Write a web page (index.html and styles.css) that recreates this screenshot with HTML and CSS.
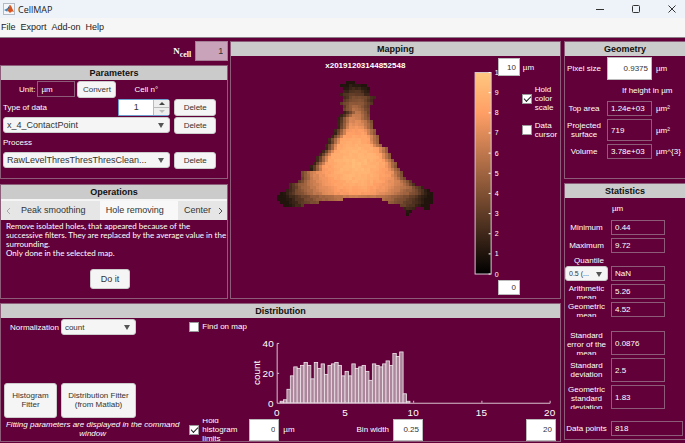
FILE: index.html
```html
<!DOCTYPE html>
<html lang="en">
<head>
  <meta charset="utf-8">
  <title>CellMAP</title>
  <meta name="viewport" content="width=device-width, initial-scale=1.0">
  <link rel="stylesheet" href="styles.css">
</head>
<body>
  <header class="titlebar">
    <svg class="logo" width="12" height="12" viewBox="0 0 12 12">
      <rect x="0.5" y="0.5" width="11" height="11" fill="#f4f6fa" stroke="#b4bac4"/>
      <path d="M1 7 L4 5.5 L5.5 6.5 L3.8 8.5 Z" fill="#3d84b8"/>
      <path d="M4 5.5 C5.5 5 6 2 7 2 L5.5 6.5 Z" fill="#23527c"/>
      <path d="M7 2 C8.2 2 9.5 6.5 11 9 C9.5 8 8.5 8.4 6.8 10 C6 8.5 5 8 3.8 8.5 C5.5 7 6 4 7 2 Z" fill="#d9541e"/>
    </svg>
    <h1>CellMAP</h1>
    <div class="window-buttons">
      <button aria-label="Minimize"><svg width="8" height="8" viewBox="0 0 8 8"><path d="M0 4.5H8"/></svg></button>
      <button aria-label="Maximize"><svg width="8" height="8" viewBox="0 0 8 8"><rect x="0.5" y="0.5" width="7" height="7" rx="1"/></svg></button>
      <button aria-label="Close"><svg width="8" height="8" viewBox="0 0 8 8"><path d="M0.5 0.5L7.5 7.5M7.5 0.5L0.5 7.5"/></svg></button>
    </div>
  </header>
  <nav class="menubar">
    <a href="#">File</a>
    <a href="#">Export</a>
    <a href="#">Add-on</a>
    <a href="#">Help</a>
  </nav>

  <div class="app">
    <main class="main">
      <div class="top">
        <div class="left">
          <div class="ncell">
            <label for="ncell">N<sub>cell</sub></label>
            <input id="ncell" value="1" readonly>
          </div>

          <section class="panel parameters">
            <h2>Parameters</h2>
            <div class="param-row unit-row">
              <label for="unit">Unit:</label>
              <input id="unit" class="value" value="µm" readonly>
              <button class="btn">Convert</button>
              <label class="cell-label" for="cellNumber">Cell n°</label>
            </div>
            <div class="param-row">
              <label for="dataType">Type of data</label>
              <div class="stepper">
                <input id="cellNumber" value="1">
                <div class="arrows">
                  <button aria-label="Increase"><i class="up"></i></button>
                  <button aria-label="Decrease"><i class="down"></i></button>
                </div>
              </div>
              <button class="btn delete">Delete</button>
            </div>
            <div class="param-row">
              <div class="dropdown">
                <select id="dataType"><option>x_4_ContactPoint</option></select>
              </div>
              <button class="btn delete">Delete</button>
            </div>
            <label class="process-label" for="process">Process</label>
            <div class="param-row">
              <div class="dropdown">
                <select id="process"><option>RawLevelThresThresThresClean...</option></select>
              </div>
              <button class="btn delete">Delete</button>
            </div>
          </section>

          <section class="panel operations">
            <h2>Operations</h2>
            <div class="tabs">
              <button class="scroll" aria-label="Previous tabs"><svg width="5" height="8" viewBox="0 0 5 8"><path d="M4 1L1 4L4 7"/></svg></button>
              <button class="tab">Peak smoothing</button>
              <button class="tab active">Hole removing</button>
              <button class="tab last">Center</button>
              <button class="scroll dark" aria-label="Next tabs"><svg width="5" height="8" viewBox="0 0 5 8"><path d="M1 1L4 4L1 7"/></svg></button>
            </div>
            <p>Remove isolated holes, that appeared because of the<br>successive filters. They are replaced by the average value in the<br>surrounding.<br>Only done in the selected map.</p>
            <button class="btn do-it">Do it</button>
          </section>
        </div>

        <section class="panel mapping">
          <h2>Mapping</h2>
          <div class="map-body">
            <svg id="map" class="map" viewBox="0 0 266 240"></svg>
            <div class="map-side">
              <div class="limit">
                <input id="mapMax" class="number" value="10">
                <label for="mapMax">µm</label>
              </div>
              <div class="check hold">
                <input type="checkbox" id="holdColor" checked>
                <label for="holdColor">Hold color scale</label>
              </div>
              <div class="check">
                <input type="checkbox" id="dataCursor">
                <label for="dataCursor">Data cursor</label>
              </div>
              <input class="number map-min" value="0" aria-label="Minimum of the color scale">
            </div>
          </div>
        </section>
      </div>

      <section class="panel distribution">
        <h2>Distribution</h2>
        <div class="dist-body">
          <div class="dist-left">
            <div class="normalization">
              <label for="norm">Normalization</label>
              <div class="dropdown">
                <select id="norm"><option>count</option></select>
              </div>
            </div>
            <div class="fitters">
              <button class="btn">Histogram Fitter</button>
              <button class="btn">Distribution Fitter (from Matlab)</button>
            </div>
            <p>Fitting parameters are displayed in the command window</p>
          </div>
          <div class="dist-right">
            <div class="check find">
              <input type="checkbox" id="findOnMap">
              <label for="findOnMap">Find on map</label>
            </div>
            <svg id="histogram" class="histogram" viewBox="0 0 380 84"></svg>
            <div class="limits">
              <div class="check">
                <input type="checkbox" id="holdHist" checked>
                <label for="holdHist">Hold histogram limits</label>
              </div>
              <input id="histMin" class="number" value="0">
              <label for="histMin">µm</label>
              <label class="bin-label" for="binWidth">Bin width</label>
              <input id="binWidth" class="number" value="0.25">
              <input class="number hist-max" value="20" aria-label="Maximum of the histogram">
            </div>
          </div>
        </div>
      </section>
    </main>

    <aside class="side">
      <section class="panel geometry">
        <h2>Geometry</h2>
        <div class="geo-grid">
          <label for="pixelSize">Pixel size</label>
          <input id="pixelSize" class="number" value="0.9375">
          <span>µm</span>
          <span class="note">If height in µm</span>
          <label for="topArea">Top area</label>
          <input id="topArea" class="value" value="1.24e+03" readonly>
          <span>µm²</span>
          <label for="surface">Projected surface</label>
          <input id="surface" class="value" value="719" readonly>
          <span>µm²</span>
          <label for="volume">Volume</label>
          <input id="volume" class="value" value="3.78e+03" readonly>
          <span>µm^{3}</span>
        </div>
      </section>

      <section class="panel statistics">
        <h2>Statistics</h2>
        <div class="stat-unit">µm</div>
        <div class="stat">
          <label for="min">Minimum</label>
          <input id="min" class="value" value="0.44" readonly>
        </div>
        <div class="stat">
          <label for="max">Maximum</label>
          <input id="max" class="value" value="9.72" readonly>
        </div>
        <label class="quantile-label" for="quantile">Quantile</label>
        <div class="stat">
          <div class="dropdown small">
            <select id="quantile"><option>0.5 (...</option></select>
          </div>
          <input class="value" value="NaN" aria-label="Quantile value" readonly>
        </div>
        <div class="stat">
          <label for="amean">Arithmetic mean</label>
          <input id="amean" class="value" value="5.26" readonly>
        </div>
        <div class="stat">
          <label for="gmean">Geometric mean</label>
          <input id="gmean" class="value" value="4.52" readonly>
        </div>
        <div class="stat tall spaced">
          <label for="sem">Standard error of the mean</label>
          <input id="sem" class="value" value="0.0876" readonly>
        </div>
        <div class="stat tall">
          <label for="std">Standard deviation</label>
          <input id="std" class="value" value="2.5" readonly>
        </div>
        <div class="stat tall">
          <label for="gstd">Geometric standard deviation</label>
          <input id="gstd" class="value" value="1.83" readonly>
        </div>
        <div class="stat points">
          <label for="points">Data points</label>
          <input id="points" class="value" value="818" readonly>
        </div>
      </section>
    </aside>
  </div>

  <script src="script.js"></script>
</body>
</html>
```
FILE: styles.css
```css
* {
  box-sizing: border-box;
}

body {
  margin: 0;
  min-height: 100vh;
  background: #62003a;
  color: #fff;
  font-family: "Liberation Sans", Arial, sans-serif;
  font-size: 8px;
  line-height: 9px;
}

input, select, button {
  font: inherit;
  color: #333;
  margin: 0;
  padding: 0;
  border: none;
  border-radius: 0;
  min-width: 0;
}

h1, h2, p {
  margin: 0;
}

svg {
  display: block;
}

/* window frame */
.titlebar {
  display: flex;
  align-items: center;
  height: 18px;
  padding: 0 9px 0 3px;
  background: #eef3fa;
}

.titlebar h1 {
  margin-left: 3px;
  color: #222;
  font-family: "Open Sans", sans-serif;
  font-size: 9px;
  font-weight: 400;
}

.window-buttons {
  display: flex;
  gap: 28px;
  margin-left: auto;
}

.window-buttons button {
  background: none;
}

.window-buttons svg {
  fill: none;
  stroke: #333;
}

.menubar {
  display: flex;
  align-items: center;
  gap: 5px;
  height: 20px;
  padding-left: 1px;
  background: #f6f6f6;
  border-bottom: 1px solid #8a8088;
}

.menubar a {
  color: #222;
  font-size: 9px;
  text-decoration: none;
}

/* layout */
.app {
  display: flex;
  gap: 3px;
  padding-top: 3px;
}

.main {
  flex: 561 1 0;
  min-width: 0;
}

.side {
  flex: 121 1 0;
  min-width: 0;
}

.top {
  display: flex;
  gap: 2px;
}

.left {
  flex: 229 1 0;
  min-width: 0;
}

.panel {
  border: 1px solid #8d5c79;
}

.panel h2 {
  height: 14px;
  background: #cbcbcb;
  color: #111;
  font-size: 9px;
  line-height: 14px;
  text-align: center;
}

/* shared controls */
.btn {
  background: #f5f5f5;
  border: 1px solid #ccc;
  border-radius: 3px;
  font-size: 8px;
}

.value {
  height: 15px;
  padding: 0 3px;
  background: transparent;
  border: 1px solid #8d5c79;
  color: #fff;
}

.number {
  background: #fff;
  border: 1px solid #bbb;
  padding: 0 3px;
  text-align: right;
}

.dropdown {
  position: relative;
}

.dropdown select {
  appearance: none;
  display: block;
  width: 100%;
  height: 16px;
  padding-left: 3px;
  background: #f5f5f5;
  border: 1px solid #ccc;
  border-radius: 3px;
  font-size: 9px;
}

.dropdown::after {
  content: "";
  position: absolute;
  right: 6px;
  top: 6px;
  border: 3px solid transparent;
  border-top: 5px solid #555;
  border-bottom: none;
  pointer-events: none;
}

.check {
  display: flex;
  align-items: center;
  gap: 3px;
}

.check input {
  appearance: none;
  flex: none;
  width: 10px;
  height: 10px;
  background: #fff;
  border: 1px solid #999;
}

.check input:checked::before {
  content: "";
  display: block;
  width: 6px;
  height: 3px;
  margin: 1px;
  border: solid #222;
  border-width: 0 0 1px 1px;
  transform: rotate(-45deg);
}

/* parameters */
.ncell {
  display: flex;
  justify-content: flex-end;
  align-items: center;
  gap: 4px;
  height: 24px;
  padding-bottom: 4px;
}

.ncell label {
  font-family: "Liberation Serif", serif;
  font-size: 9px;
  font-weight: 700;
}

.ncell sub {
  font-size: 8px;
  line-height: 0;
}

.ncell input {
  width: 33px;
  height: 20px;
  padding-right: 4px;
  background: #c8a3ba;
  border: 1px solid #a57d95;
  font-size: 9px;
  text-align: right;
}

.parameters {
  min-height: 114px;
}

.param-row {
  display: flex;
  align-items: center;
  justify-content: space-between;
  gap: 4px;
  height: 18px;
  padding: 0 11px 0 2px;
}

.unit-row {
  justify-content: flex-start;
  gap: 2px;
  padding-left: 18px;
}

.unit-row .value {
  width: 38px;
  height: 16px;
}

.unit-row .btn {
  width: 39px;
  height: 17px;
}

.cell-label {
  margin-left: 16px;
}

.btn.delete {
  flex: none;
  width: 42px;
  height: 17px;
}

.param-row .dropdown {
  flex: 1;
}

.stepper {
  display: flex;
  width: 52px;
  height: 17px;
  margin-left: auto;
  background: #fff;
  border: 1px solid #6d9fd0;
  border-radius: 0 3px 3px 0;
}

.stepper input {
  flex: 1;
  background: none;
  font-size: 9px;
  text-align: center;
}

.arrows {
  display: grid;
  width: 16px;
  gap: 1px;
  background: #bbb;
}

.arrows button {
  display: grid;
  place-items: center;
  background: #eee;
  border-left: 1px solid #bbb;
}

.arrows i {
  border: 3px solid transparent;
}

.arrows .up {
  border-top: none;
  border-bottom-color: #444;
}

.arrows .down {
  border-bottom: none;
  border-top-color: #bbb;
}

.process-label {
  display: block;
  height: 17px;
  padding: 4px 2px;
}

/* operations */
.operations {
  margin-top: 5px;
  min-height: 115px;
}

.tabs {
  display: flex;
  height: 21px;
  padding-top: 2px;
  background: #f5f5f5;
}

.tabs button {
  background: #e6e6e6;
  font-size: 9px;
  white-space: nowrap;
}

.tabs .scroll {
  display: grid;
  place-items: center;
  flex: none;
  width: 14px;
}

.tabs .scroll svg {
  fill: none;
  stroke: #aaa;
}

.tabs .scroll.dark svg {
  stroke: #555;
}

.tabs .tab {
  flex: 86 1 0;
  padding-left: 6px;
  text-align: left;
}

.tabs .tab.active {
  flex: 79 1 0;
  background: #f8f8f8;
}

.tabs .tab.last {
  flex: 32 1 0;
}

.operations p {
  padding: 2px 0 0 5px;
  font-family: Lato, "Liberation Sans", sans-serif;
  white-space: nowrap;
}

.do-it {
  display: block;
  width: 40px;
  height: 20px;
  margin: 11px auto 0 89px;
  font-size: 9px;
}

/* mapping */
.mapping {
  flex: 330 1 0;
  min-width: 0;
}

.map-body {
  display: flex;
}

.map {
  flex: 266 1 0;
  min-width: 0;
  overflow: visible;
}

.map text {
  fill: #fff;
  font-size: 7px;
}

.map .map-title {
  font-size: 8px;
  font-weight: 700;
}

.map-side {
  flex: 62 1 0;
  display: flex;
  flex-direction: column;
  align-items: flex-start;
  padding: 2px 0;
}

.map-side .limit {
  display: flex;
  align-items: center;
  gap: 3px;
}

.map-side .number {
  width: 22px;
  height: 18px;
}

.map-side .check {
  margin: 9px 0 0 24px;
}

.map-side .check label {
  width: 22px;
}

.map-side .map-min {
  height: 15px;
  margin-top: auto;
}

/* distribution */
.distribution {
  margin-top: 4px;
}

.dist-body {
  display: flex;
}

.dist-left {
  flex: 178 1 0;
  min-width: 0;
  display: flex;
  flex-direction: column;
  padding: 1px 0 0 3px;
}

.dist-right {
  flex: 380 1 0;
  min-width: 0;
}

.normalization {
  display: flex;
  align-items: center;
  gap: 2px;
  padding-left: 6px;
}

.normalization .dropdown {
  width: 75px;
}

.normalization select {
  font-size: 8px;
}

.fitters {
  display: flex;
  gap: 4px;
  margin-top: auto;
}

.fitters .btn {
  width: 53px;
  height: 35px;
  padding: 0 5px;
}

.fitters .btn + .btn {
  width: 75px;
}

.dist-left p {
  height: 23px;
  padding-top: 2px;
  font-style: italic;
  text-align: center;
}

.find {
  height: 17px;
  padding-left: 8px;
}

.histogram {
  width: 100%;
}

.histogram text {
  fill: #fff;
  font-size: 10px;
}

.limits {
  display: flex;
  align-items: center;
  height: 22px;
  padding: 0 4px 0 8px;
}

.limits .check {
  width: 60px;
}

.limits .check label {
  display: flex;
  align-items: center;
  height: 22px;
  overflow: hidden;
}

.limits .number {
  width: 30px;
  height: 22px;
}

.limits #histMin + label {
  margin-left: 4px;
}

.bin-label {
  margin: 0 4px 0 auto;
}

.limits .hist-max {
  margin-left: 103px;
}

/* geometry */
.side .panel {
  border-right: none;
}

.geometry {
  min-height: 138px;
}

.geo-grid {
  display: grid;
  grid-template-columns: 38px 45px 1fr;
  grid-template-rows: 23px 15px 15px 22px 15px;
  align-items: center;
  gap: 3px 4px;
  padding-top: 1px;
}

.geo-grid label {
  text-align: center;
}

.geo-grid input {
  height: 100%;
}

.geo-grid .note {
  grid-column: 1 / -1;
  padding-left: 57px;
}

/* statistics */
.statistics {
  margin-top: 4px;
}

.stat-unit {
  height: 22px;
  padding: 6px 0 0 47px;
}

.stat {
  display: flex;
  align-items: center;
  gap: 3px;
  height: 15px;
  margin-bottom: 3px;
}

.stat label {
  width: 43px;
  max-height: 15px;
  overflow: hidden;
  text-align: center;
}

.stat .value {
  width: 54px;
}

.stat.tall, .stat.tall .value {
  height: 24px;
}

.stat.tall label {
  max-height: 24px;
}

.stat.spaced {
  margin-top: 14px;
}

.quantile-label {
  display: block;
  width: 48px;
  height: 10px;
  text-align: center;
}

.dropdown.small {
  width: 43px;
}

.dropdown.small select {
  height: 15px;
  font-size: 7px;
}

.stat.points {
  margin-top: 12px;
}

.stat.points label {
  white-space: nowrap;
}

.stat.points .value {
  flex: 1;
  margin-right: 2px;
}
```
FILE: script.js
```js
const SVG_NS = "http://www.w3.org/2000/svg";

function add(parent, name, attrs, text) {
  const el = document.createElementNS(SVG_NS, name);
  for (const key in attrs) el.setAttribute(key, attrs[key]);
  if (text !== undefined) el.textContent = text;
  parent.appendChild(el);
  return el;
}

// copper colormap, v from 0 to 1
function copper(v) {
  const c = [Math.min(1, 1.25 * v), 0.78 * v, 0.5 * v];
  return "rgb(" + c.map(x => Math.round(x * 255)).join(",") + ")";
}

// first and last column of the cell on each line, holes left out
const rows = [
  [27,29], [25,33], [26,34], [26,34], [25,34], [26,36], [26,35], [25,35],
  [26,34], [26,34], [26,34], [25,34], [24,34], [24,35], [24,35], [24,35],
  [23,36], [23,36], [22,37], [21,37], [21,37], [20,38], [20,40], [19,40],
  [18,41], [17,41], [17,42], [16,43], [15,43], [15,44], [12,45], [12,45],
  [12,46], [11,48], [8,49], [8,52], [7,54], [5,55], [4,55], [4,25,39,55],
  [5,17,41,55], [6,12,45,54], [46,49,53,54], [47,48], [47,47]
];

function noise(x, y) {
  const n = Math.sin(x * 12.9898 + y * 78.233) * 43758.5453;
  return n - Math.floor(n) - 0.5;
}

function drawMap() {
  const svg = document.getElementById("map");
  add(svg, "text", { x: 134, y: 12, "text-anchor": "middle", class: "map-title" }, "x20191203144852548");

  const cell = add(svg, "g", { "shape-rendering": "crispEdges" });
  rows.forEach((row, i) => {
    for (let s = 0; s < row.length; s += 2) {
      for (let x = row[s]; x <= row[s + 1]; x++) {
        const dx = x - 30;
        const dy = i - 27;
        let v = 0.92 - 0.00115 * (dx * dx + dy * dy);
        const fromLeft = x - row[0];
        const fromRight = row[row.length - 1] - x;
        // steep left flank
        if (i > 9 && i < 30) v *= Math.min(1, 0.25 + fromLeft * 0.2);
        else v *= Math.min(1, 0.65 + fromLeft * 0.12);
        v *= Math.min(1, 0.6 + fromRight * 0.12);
        if (i > 37) v *= 0.8;
        v += noise(x, i) * 0.05;
        v = Math.max(0.1, Math.min(1, v));
        add(cell, "rect", { x: 34 + x * 3, y: 25 + i * 3, width: 3, height: 3, fill: copper(v) });
      }
    }
  });

  // colorbar
  const grad = add(add(svg, "defs", {}), "linearGradient", { id: "copper", x1: 0, y1: 1, x2: 0, y2: 0 });
  [0, 0.2, 0.4, 0.6, 0.8, 1].forEach(v => add(grad, "stop", { offset: v, "stop-color": copper(v) }));
  add(svg, "rect", { x: 243.5, y: 16.5, width: 16, height: 201, fill: "url(#copper)", stroke: "#d8c8d0" });
  for (let i = 0; i <= 10; i++) {
    const y = 217.5 - i * 20.1;
    add(svg, "path", { d: "M257 " + y + "h2", stroke: "#fff" });
    add(svg, "text", { x: 263, y: y + 2.5 }, i);
  }
}

const counts = [
  0, 1, 2, 9, 18, 24, 23, 25, 27, 25, 16, 27, 23, 26, 19, 25, 26, 27, 25, 18,
  21, 18, 26, 23, 24, 25, 21, 15, 26, 25, 24, 26, 28, 25, 33, 31, 34, 6, 1
];

function drawHistogram() {
  const svg = document.getElementById("histogram");
  const left = 96, base = 68, bin = 3.43, unit = 1.5;
  counts.forEach((n, i) => {
    add(svg, "rect", {
      x: left + i * bin, y: base - n * unit, width: bin, height: n * unit,
      fill: "#ac879c", stroke: "#f0e6ec", "stroke-width": 0.8
    });
  });
  add(svg, "path", { d: "M98.5 8.5H96.5V68.5H370.5V66M96.5 38.5h2M165 68v-2M233.5 68v-2M302 68v-2", fill: "none", stroke: "#d8c4d0" });
  [0, 20, 40].forEach(n => {
    add(svg, "text", { x: 93, y: base + 4 - n * unit, "text-anchor": "end" }, n);
  });
  [0, 5, 10, 15, 20].forEach(n => {
    add(svg, "text", { x: left + n * 13.7, y: 81, "text-anchor": "middle" }, n);
  });
  add(svg, "text", { transform: "translate(79 38) rotate(-90)", "text-anchor": "middle" }, "count");
}

drawMap();
drawHistogram();
```
